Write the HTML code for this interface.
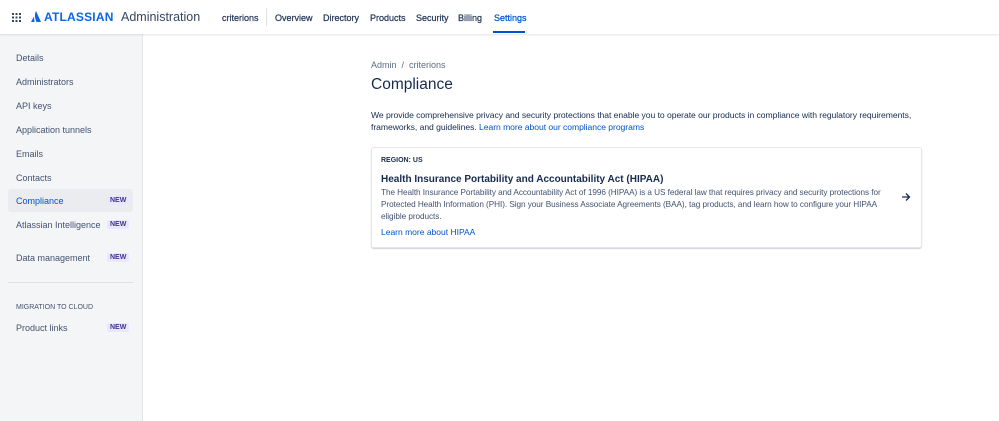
<!DOCTYPE html>
<html><head><meta charset="utf-8"><style>
*{box-sizing:border-box;margin:0;padding:0}
body{width:999px;height:421px;overflow:hidden;background:#fff;font-family:"Liberation Sans",sans-serif;color:#172b4d;position:relative}
.hdr{position:absolute;top:0;left:0;width:999px;height:34px;background:#fff;box-shadow:0 1px 2px rgba(9,30,66,.12);z-index:2}
.hdr span{position:absolute;font-size:9px;color:#253858;top:13px;-webkit-text-stroke:.25px #253858}
.side{position:absolute;top:34px;left:0;width:143px;height:387px;background:#f4f5f7;border-right:1px solid #e4e6ea}
.side .it{position:absolute;left:16px;font-size:9px;color:#42526e}
.new{position:absolute;left:107px;font-size:7px;font-weight:bold;color:#403294;background:#eae6ff;padding:1px 3px;border-radius:2px}
.c{position:absolute}
a{color:#0052cc;text-decoration:none}
</style></head><body>
<div class="hdr">
<svg style="position:absolute;left:12px;top:13px" width="9" height="9" viewBox="0 0 9 9" fill="#344563"><rect x="0" y="0" width="2" height="2"/><rect x="3.5" y="0" width="2" height="2"/><rect x="7" y="0" width="2" height="2"/><rect x="0" y="3.5" width="2" height="2"/><rect x="3.5" y="3.5" width="2" height="2"/><rect x="7" y="3.5" width="2" height="2"/><rect x="0" y="7" width="2" height="2"/><rect x="3.5" y="7" width="2" height="2"/><rect x="7" y="7" width="2" height="2"/></svg>
<svg style="position:absolute;left:31px;top:11px" width="10" height="11" viewBox="0 0 10 11"><path d="M3 5.5 L0 11 H3.5 Z M5 0 C3.5 3 3.5 6 5.5 11 H10 Z" fill="#0c66e4"/></svg>
<div style="position:absolute;left:44px;top:10px;font-size:12px;font-weight:bold;color:#0c66e4;letter-spacing:.2px">ATLASSIAN</div>
<div style="position:absolute;left:121px;top:10px;font-size:12.5px;color:#344563">Administration</div>
<span style="left:222px">criterions</span>
<div style="position:absolute;left:266px;top:8px;width:1px;height:18px;background:#dfe1e6"></div>
<span style="left:275px">Overview</span>
<span style="left:323px">Directory</span>
<span style="left:370px">Products</span>
<span style="left:416px">Security</span>
<span style="left:458px">Billing</span>
<span style="left:494px;color:#0052cc;-webkit-text-stroke:.25px #0052cc">Settings</span>
<div style="position:absolute;left:493px;top:31px;width:32px;height:2px;background:#0052cc"></div>
</div>
<div class="side">
<div class="it" style="top:19px">Details</div>
<div class="it" style="top:43px">Administrators</div>
<div class="it" style="top:67px">API keys</div>
<div class="it" style="top:91px">Application tunnels</div>
<div class="it" style="top:115px">Emails</div>
<div class="it" style="top:139px">Contacts</div>
<div style="position:absolute;left:8px;top:155px;width:125px;height:23px;background:#ebecf0;border-radius:3px"></div>
<div class="it" style="top:162px;color:#0052cc">Compliance</div><div class="new" style="top:162px">NEW</div>
<div class="it" style="top:186px">Atlassian Intelligence</div><div class="new" style="top:186px">NEW</div>
<div class="it" style="top:219px">Data management</div><div class="new" style="top:219px">NEW</div>
<div style="position:absolute;left:8px;top:248px;width:125px;height:1px;background:#dfe1e6"></div>
<div class="it" style="top:270px;font-size:7px">MIGRATION TO CLOUD</div>
<div class="it" style="top:289px">Product links</div><div class="new" style="top:289px">NEW</div>
</div>
<div class="c" style="left:371px;top:60px;font-size:9px;color:#5e6c84">Admin &nbsp;/&nbsp; criterions</div>
<div class="c" style="left:371px;top:76px;font-size:15.5px;color:#172b4d">Compliance</div>
<div class="c" style="left:371px;top:109px;width:545px;font-size:8.6px;line-height:12px;color:#172b4d;letter-spacing:-.05px">We provide comprehensive privacy and security protections that enable you to operate our products in compliance with regulatory requirements, frameworks, and guidelines. <a>Learn more about our compliance programs</a></div>
<div class="c" style="left:371px;top:147px;width:551px;height:101px;border:1px solid #e4e6ea;border-radius:3px;box-shadow:0 1px 1px rgba(9,30,66,.2)">
<div class="c" style="left:9px;top:9px;font-size:7px;font-weight:bold;color:#172b4d">REGION: US</div>
<div class="c" style="left:9px;top:26px;font-size:10px;font-weight:bold;color:#172b4d">Health Insurance Portability and Accountability Act (HIPAA)</div>
<div class="c" style="left:9px;top:39px;width:518px;font-size:8.2px;line-height:12px;color:#42526e;letter-spacing:-.05px">The Health Insurance Portability and Accountability Act of 1996 (HIPAA) is a US federal law that requires privacy and security protections for Protected Health Information (PHI). Sign your Business Associate Agreements (BAA), tag products, and learn how to configure your HIPAA eligible products.</div>
<div class="c" style="left:9px;top:79px;font-size:8.5px"><a>Learn more about HIPAA</a></div>
<svg class="c" style="left:529px;top:44px" width="10" height="10" viewBox="0 0 10 10"><path d="M1 5H8.5M5 1.5L8.5 5L5 8.5" stroke="#172b4d" stroke-width="1.3" fill="none"/></svg>
</div>
</body></html>
